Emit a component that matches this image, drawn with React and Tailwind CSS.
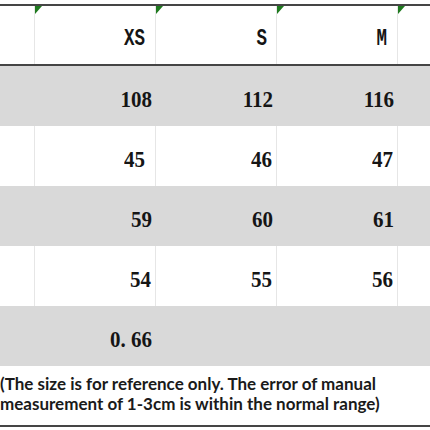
import React from 'react';

const rows = [
  { bg: 'gray', vals: ['108', '112', '116'] },
  { bg: 'white', vals: ['45', '46', '47'], first: 'pr-[10px]' },
  { bg: 'gray', vals: ['59', '60', '61'] },
  { bg: 'white', vals: ['54', '55', '56'] },
  { bg: 'gray', vals: ['0. 66', '', ''] },
];

const Flag = () => (
  <svg className="absolute left-0 top-0" width="8" height="9" viewBox="0 0 8 9">
    <polygon points="0,0 7,0 0,8" fill="#1f7a1f" />
  </svg>
);

const Num = ({ children }) => (
  <span className="inline-block origin-center scale-y-[1.13] font-['Liberation_Serif',serif] text-[21px] font-bold leading-none text-[#151515]">
    {children}
  </span>
);

const App = () => {
  return (
    <div className="h-[430px] w-[430px] overflow-hidden bg-white">
      <div className="h-[4px]" />

      {/* header */}
      <div className="flex h-[62px] border-y-2 border-[#454545]">
        <div className="w-[35px] border-r border-[#e6e6e6]" />
        <div className="relative flex w-[121px] items-center justify-end border-r border-[#e6e6e6] pt-[7px] pr-[10px]">
          <Flag />
          <span className="inline-block scale-y-[1.4] font-['Liberation_Mono',monospace] text-[17.5px] font-bold leading-none text-[#151515]">XS</span>
        </div>
        <div className="relative flex w-[121px] items-center justify-end border-r border-[#e6e6e6] pt-[7px] pr-[9px]">
          <Flag />
          <span className="inline-block scale-y-[1.4] font-['Liberation_Mono',monospace] text-[17.5px] font-bold leading-none text-[#151515]">S</span>
        </div>
        <div className="relative flex w-[121px] items-center justify-end border-r border-[#e6e6e6] pt-[7px] pr-[10px]">
          <Flag />
          <span className="inline-block scale-y-[1.4] font-['Liberation_Mono',monospace] text-[17.5px] font-bold leading-none text-[#151515]">M</span>
        </div>
        <div className="relative flex-1">
          <Flag />
        </div>
      </div>

      {/* body */}
      {rows.map((r, i) => (
        <div
          key={i}
          className={`flex h-[60px] ${r.bg === 'gray' ? 'bg-[#d9d9d9]' : 'bg-white'}`}
        >
          <div className={`w-[35px] ${r.bg === 'white' ? 'border-r border-[#e6e6e6]' : ''}`} />
          {r.vals.map((v, j) => (
            <div
              key={j}
              className={`flex w-[121px] items-center justify-end pt-[7px] ${
                r.bg === 'white' ? 'border-r border-[#e6e6e6]' : ''
              } ${j === 0 && r.first ? r.first : 'pr-[4px]'}`}
            >
              {v && <Num>{v}</Num>}
            </div>
          ))}
          <div className="flex-1" />
        </div>
      ))}

      {/* note */}
      <div className="h-[61px] border-b-2 border-[#454545] pt-[8px] font-['Lato',sans-serif] text-[17px] font-bold leading-[20px] text-[#1a1a1a]">
        <p>(The size is for reference only. The error of manual</p>
        <p>measurement of 1-3cm is within the normal range)</p>
      </div>
    </div>
  );
};

export default App;
